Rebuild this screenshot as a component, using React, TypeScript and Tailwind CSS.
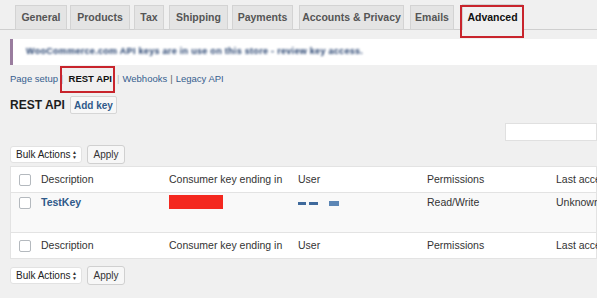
import React from "react";

const tabs = [
  { label: "General", w: "w-[52px]", ml: "ml-[15px]" },
  { label: "Products", w: "w-[60px]", ml: "ml-[3px]" },
  { label: "Tax", w: "w-[30px]", ml: "ml-[4px]" },
  { label: "Shipping", w: "w-[59px]", ml: "ml-[5px]" },
  { label: "Payments", w: "w-[61px]", ml: "ml-[4px]" },
  { label: "Accounts & Privacy", w: "w-[105px]", ml: "ml-[6px]" },
  { label: "Emails", w: "w-[44px]", ml: "ml-[6px]" },
];

const Checkbox = () => (
  <span className="block h-[12px] w-[12px] rounded-[2px] border border-[#b4b9be] bg-white" />
);

const BulkBar = () => (
  <div className="flex items-center pl-[10px]">
    <div className="flex h-[17px] w-[72px] shrink-0 items-center justify-between whitespace-nowrap rounded-[3px] border border-[#e2e2e2] bg-white pl-[5px] pr-[4px] text-[10px] text-[#222]">
      <span>Bulk Actions</span>
      <span className="flex flex-col text-[5px] leading-[5px] text-[#333]">
        <span>▲</span>
        <span>▼</span>
      </span>
    </div>
    <button className="ml-[5px] flex h-[19px] w-[38px] shrink-0 items-center justify-center rounded-[3px] border border-[#d0d0d0] bg-[#f7f7f7] text-[10px] text-[#333]">
      Apply
    </button>
  </div>
);

const HeaderRow = () => (
  <div className="flex h-[25px] items-center whitespace-nowrap bg-white text-[10.5px] text-[#333]">
    <div className="w-[30px] shrink-0 pl-[8px]">
      <Checkbox />
    </div>
    <div className="w-[128px] shrink-0">Description</div>
    <div className="w-[129px] shrink-0">Consumer key ending in</div>
    <div className="w-[129px] shrink-0">User</div>
    <div className="w-[129px] shrink-0">Permissions</div>
    <div className="shrink-0">Last access</div>
  </div>
);

export default function App() {
  return (
    <div className="relative h-[298px] w-[597px] overflow-hidden bg-[#f0f0f0] font-['Liberation_Sans',Arial,sans-serif]">
      {/* tab nav */}
      <nav className="flex h-[30px] items-end border-b border-[#cfcfcf] pt-[5px]">
        {tabs.map((t) => (
          <div
            key={t.label}
            className={`${t.w} ${t.ml} -mb-px flex h-[25px] shrink-0 items-center justify-center whitespace-nowrap border border-[#d3d3d3] bg-[#e4e4e4] text-[10.5px] font-bold text-[#555]`}
          >
            {t.label}
          </div>
        ))}
        <div className="-mb-px ml-[8px] flex h-[26px] w-[61px] shrink-0 items-center justify-center border border-b-0 border-[#d3d3d3] bg-[#f0f0f0] text-[10.5px] font-bold text-[#111]">
          Advanced
        </div>
      </nav>

      {/* notice */}
      <div className="ml-[10px] mt-[9px] flex h-[26px] items-center border-l-[3px] border-[#9a7d9f] bg-white pl-[13px]">
        <p className="select-none whitespace-nowrap text-[9px] font-bold tracking-[0.3px] text-[#24406e] blur-[1.2px]">
          WooCommerce.com API keys are in use on this store - review key access.
        </p>
      </div>

      {/* sub nav */}
      <div className="mt-[7px] flex items-center whitespace-nowrap pl-[10px] text-[9.5px] text-[#37608f]">
        <span>Page setup</span>
        <span className="ml-[3px] mr-[5px] text-[#bbb]">|</span>
        <span className="font-bold text-[#111]">REST API</span>
        <span className="ml-[5px] mr-[3px] text-[#bbb]">|</span>
        <span>Webhooks</span>
        <span className="mx-[3px] text-[#666]">|</span>
        <span>Legacy API</span>
      </div>

      {/* heading */}
      <div className="mt-[10px] flex items-center pl-[10px]">
        <h1 className="text-[12px] font-bold leading-[18px] text-[#1d1d1d]">REST API</h1>
        <button className="ml-[5px] flex h-[18px] w-[47px] items-center justify-center rounded-[2px] border border-[#d6d6d6] bg-[#f7f7f7] text-[10px] font-bold text-[#2f5a8a]">
          Add key
        </button>
      </div>

      {/* search */}
      <div className="mt-[9px] flex justify-end">
        <div className="h-[18px] w-[92px] border border-[#e0e0e0] bg-white" />
      </div>

      <div className="mt-[4px]">
        <BulkBar />
      </div>

      {/* table */}
      <div className="ml-[10px] mt-[2px] border border-[#e3e3e3]">
        <div className="border-b border-[#e3e3e3]">
          <HeaderRow />
        </div>
        <div className="flex h-[40px] items-start whitespace-nowrap border-b border-[#e3e3e3] bg-[#f9f9f9] pt-[2px] text-[10.5px] text-[#333]">
          <div className="w-[30px] shrink-0 pl-[8px] pt-[2px]">
            <Checkbox />
          </div>
          <div className="w-[128px] shrink-0 font-bold text-[#2f5a8a]">TestKey</div>
          <div className="w-[129px] shrink-0">
            <span className="block h-[14px] w-[54px] bg-[#f4281f]" />
          </div>
          <div className="flex w-[129px] shrink-0 items-center gap-[3px] pt-[6px] blur-[0.6px]">
            <span className="block h-[3px] w-[8px] bg-[#3f6a9c]" />
            <span className="block h-[3px] w-[9px] bg-[#3f6a9c]" />
            <span className="ml-[8px] block h-[5px] w-[10px] bg-[#5c86b5]" />
          </div>
          <div className="w-[129px] shrink-0">Read/Write</div>
          <div className="shrink-0">Unknown</div>
        </div>
        <HeaderRow />
      </div>

      <div className="mt-[7px]">
        <BulkBar />
      </div>

      {/* annotation boxes */}
      <div className="absolute left-[460px] top-[5px] h-[33px] w-[64px] border-2 border-[#c8242c]" />
      <div className="absolute left-[60px] top-[66px] h-[27px] w-[55px] border-2 border-[#c8242c]" />
    </div>
  );
}
